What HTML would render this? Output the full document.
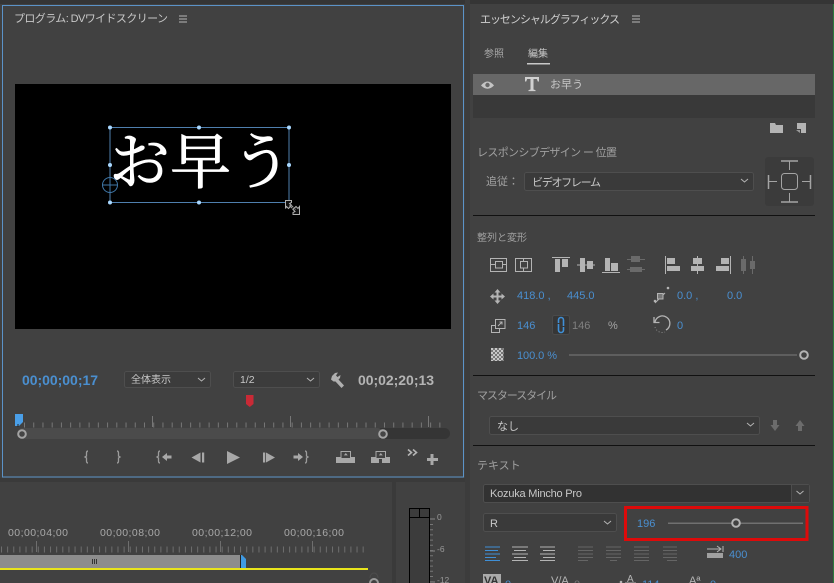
<!DOCTYPE html>
<html><head><meta charset="utf-8"><style>
html,body{margin:0;padding:0;background:#414141;width:834px;height:583px;overflow:hidden}
svg{display:block;filter:blur(.3px)}
text{font-family:"Liberation Sans","Noto Sans CJK JP",sans-serif;font-size:11px}
.g{fill:#a0a0a0}.l{fill:#c8c8c8}
.s{stroke:#b4b4b4;fill:none}
</style></head><body>
<svg width="834" height="583" viewBox="0 0 834 583" xmlns="http://www.w3.org/2000/svg">
<defs><pattern id="ck" width="4" height="4" patternUnits="userSpaceOnUse" x="491" y="348"><rect width="4" height="4" fill="#777"/><rect width="2" height="2" fill="#c8c8c8"/><rect x="2" y="2" width="2" height="2" fill="#c8c8c8"/></pattern></defs>
<rect width="834" height="583" fill="#414141"/>
<rect width="834" height="4" fill="#353535"/>
<rect x="0" y="478" width="465" height="4" fill="#3a3a3a"/>
<rect x="392" y="482" width="4" height="101" fill="#3a3a3a"/>
<rect x="465" y="0" width="5" height="583" fill="#3c3c3c"/>
<rect x="833" y="4" width="1" height="579" fill="#2c7a3c"/>
<rect x="2.500" y="5.500" width="461" height="471.500" fill="none" stroke="#5b93c8"/>

<text x="14" y="22" class="l" textLength="154">プログラム: DVワイドスクリーン</text>
<path d="M179 16h8M179 19h8M179 22h8" stroke="#b8b8b8"/>

<rect x="15" y="84" width="436" height="245" fill="#000"/>
<text x="109" y="183" fill="#fff" stroke="#fff" stroke-width=".7" style="font-family:'Noto Serif CJK SC',serif;font-size:61px">お早う</text>
<rect x="110" y="127.500" width="179" height="75" fill="none" stroke="#4f7fae"/>
<g fill="#a9d8ff"><circle cx="110" cy="127.500" r="2"/><circle cx="199" cy="127.500" r="2"/><circle cx="289" cy="127.500" r="2"/><circle cx="110" cy="165" r="2"/><circle cx="289" cy="165" r="2"/><circle cx="110" cy="202.500" r="2"/><circle cx="199" cy="202.500" r="2"/><circle cx="289" cy="202.500" r="2"/></g>
<circle cx="110" cy="185" r="7.500" fill="none" stroke="#3f77a8"/><path d="M102 185h16M110 177v16" stroke="#3f77a8"/>
<path d="M285.500 200.500h6v2l-2 1 2 2-3 3-2-2-1 2h-0z" fill="#111" stroke="#b0b0b0"/>
<path d="M299.500 214.500h-6.500v-2l2-1-2-2 3-3 2 2 1.500-2z" fill="#111" stroke="#b0b0b0"/>
<path d="M290 205l5 5" stroke="#999" stroke-width="3" stroke-dasharray="1.200 1"/>

<text x="22" y="385" fill="#4a8fd0" style="font-size:14px;font-weight:bold" textLength="76">00;00;00;17</text>
<rect x="124.500" y="371.500" width="86" height="16" rx="2" fill="#3c3c3c" stroke="#4e4e4e"/>
<text x="131" y="383" class="l" style="font-size:10px">全体表示</text>
<path d="M198 378l3.500 3 3.500-3" class="s"/>
<rect x="233.500" y="371.500" width="86" height="16" rx="2" fill="#3c3c3c" stroke="#4e4e4e"/>
<text x="240" y="383" class="l" style="font-size:10.500px">1/2</text>
<path d="M307 378l3.500 3 3.500-3" class="s"/>
<path d="M332 376l3-3 3-.5-2 3 1.500 1.500 3-2-.5 3-1.500 1.500 5.500 6-2.500 2.500-6-6.500-2 0-2.500-2z" fill="#b0b0b0"/>
<text x="358" y="385" fill="#b4b4b4" style="font-size:14px;font-weight:bold" textLength="76">00;02;20;13</text>
<path d="M246 395h7.500v9l-3.750 3-3.750-3z" fill="#c92a36"/>

<line x1="24" y1="425" x2="448" y2="425" stroke="#777" stroke-width="5" stroke-dasharray="1 8.230"/>
<path d="M152.500 416v11M290.500 416v11M428.500 416v11" stroke="#777"/>
<rect x="17" y="428" width="433" height="11" rx="5.500" fill="#353535"/>
<rect x="17" y="428" width="366" height="11" rx="5.500" fill="#4b4b4b"/>
<circle cx="22" cy="434" r="3.800" fill="#444" stroke="#a4a4a4" stroke-width="2"/>
<circle cx="383" cy="434" r="3.800" fill="#444" stroke="#a4a4a4" stroke-width="2"/>
<path d="M15 414h8v8l-4 4h-4z" fill="#4a9fe8"/>
<path d="M18 424v3" stroke="#222"/>

<g fill="none" stroke="#9c9c9c" stroke-width="1.300">
<path d="M88 451q-1.500 0-1.500 2v3l-1.500 1 1.500 1v3q0 2 1.500 2"/>
<path d="M117 451q1.500 0 1.500 2v3l1.500 1-1.500 1v3q0 2-1.500 2"/>
<path d="M160 451q-1.500 0-1.500 2v3l-1.500 1 1.500 1v3q0 2 1.500 2"/>
<path d="M305 451q1.500 0 1.500 2v3l1.500 1-1.500 1v3q0 2-1.500 2"/>
</g>
<g fill="#a8a8a8">
<path d="M162 457l5-4v2.500h4.500v3h-4.500v2.500z"/>
<path d="M191.500 457.500l9-5v10z"/><rect x="202" y="452.500" width="2.200" height="10"/>
<path d="M227 451l13 6.500-13 6.500z"/>
<rect x="263" y="452.500" width="2.200" height="10"/><path d="M266 452.500l9 5-9 5z"/>
<path d="M303 457l-5-4v2.500h-4.500v3h4.500v2.500z"/>
<rect x="336" y="457" width="8" height="6"/><rect x="347" y="457" width="8" height="6"/><rect x="344" y="459" width="3" height="4" />
<path d="M341 451.500h9.500v7h-9.500z" fill="#414141" stroke="#a8a8a8"/><path d="M345.800 453l2 2.400h-4z"/>
<rect x="371" y="457" width="8" height="6"/><rect x="382" y="457" width="8" height="6"/>
<path d="M376 451.500h9.500v7h-9.500z" fill="#414141" stroke="#a8a8a8"/><path d="M380.800 453l2 2.400h-4z"/>
<rect x="430.500" y="454" width="3" height="11"/><rect x="427" y="458" width="11" height="3"/>
</g>
<path d="M408 449.500l3.500 3-3.500 3M413 449.500l3.500 3-3.500 3" fill="none" stroke="#b4b4b4" stroke-width="1.600"/>

<g fill="#a8a8a8">
<text x="8" y="536" style="font-size:10.500px" textLength="60">00;00;04;00</text>
<text x="100" y="536" style="font-size:10.500px" textLength="60">00;00;08;00</text>
<text x="192" y="536" style="font-size:10.500px" textLength="60">00;00;12;00</text>
<text x="284" y="536" style="font-size:10.500px" textLength="60">00;00;16;00</text>
</g>
<line x1="1" y1="549.500" x2="368" y2="549.500" stroke="#6e6e6e" stroke-width="6" stroke-dasharray="1 5.130"/>
<path d="M36.500 541v11M128.500 541v11M220.500 541v11M312.500 541v11" stroke="#6e6e6e"/>
<rect x="0" y="555" width="240" height="13" fill="#8d8d8d"/>
<path d="M92.500 559v5M94.500 559v5M96.500 559v5" stroke="#333"/>
<path d="M241 555h1l4 4v9h-5z" fill="#3f9ae2"/>
<rect x="240" y="555" width="1" height="13" fill="#222"/>
<rect x="0" y="568" width="368" height="2" fill="#e8e41c"/>
<circle cx="374" cy="583" r="4" fill="none" stroke="#999" stroke-width="2"/>
<path d="M370 578a4 5 0 0 1 8 0" fill="none" stroke="#4c4c4c"/>

<rect x="409.500" y="508.500" width="20" height="80" fill="#3c3c3c" stroke="#000"/>
<path d="M409.500 517.500h20M419.500 508.500v9" stroke="#000"/>
<path d="M430 519h5M430 551h5M430 582h5" stroke="#888"/>
<line x1="431.500" y1="524" x2="431.500" y2="583" stroke="#777" stroke-width="3" stroke-dasharray="1 4.200"/>
<g fill="#999"><text x="437" y="520" style="font-size:8.500px">0</text><text x="437" y="552" style="font-size:8.500px">-6</text><text x="437" y="583" style="font-size:8.500px">-12</text></g>

<text x="480" y="23" fill="#d0d0d0" textLength="140">エッセンシャルグラフィックス</text>
<path d="M632 16h8M632 19h8M632 22h8" stroke="#b8b8b8"/>
<text x="484" y="57" fill="#a8a8a8" style="font-size:10px">参照</text>
<text x="528" y="57" fill="#c8c8c8" style="font-size:10px">編集</text>
<rect x="527" y="63" width="23" height="1.500" fill="#c8c8c8"/>
<rect x="473" y="74" width="342" height="21" fill="#676767"/>
<rect x="473" y="95" width="342" height="23" fill="#393939"/>
<path d="M481 85.500q6.500-8 13 0q-6.500 6.500-13 0z" fill="#c4c4c4"/><circle cx="487.500" cy="85" r="2.200" fill="#676767"/>
<path d="M525 77h14v4.500h-1.200l-1-2.500h-3.300v10.500l2 .6v1h-7v-1l2-.6v-10.500h-3.300l-1 2.500h-1.200z" fill="#d0d0d0"/>
<text x="550" y="88" fill="#c8c8c8" style="font-size:11px">お早う</text>
<path d="M770 123h5l1 2h7v8h-13z" fill="#b4b4b4"/>
<path d="M797 123h9v10h-5v-4h-4z" fill="#b4b4b4"/><path d="M796 130h4v3z" fill="#999"/>

<text x="477" y="156" class="g" textLength="140">レスポンシブデザイン ー 位置</text>
<text x="486" y="185" class="g">追従：</text>
<rect x="524.500" y="172.500" width="229" height="18" rx="2" fill="#3a3a3a" stroke="#4e4e4e"/>
<text x="532" y="186" fill="#c8c8c8" textLength="69">ビデオフレーム</text>
<path d="M741 179l3.500 3 3.500-3" class="s"/>
<rect x="765" y="157" width="49" height="49" rx="3" fill="#3b3b3b"/>
<g fill="none" stroke="#a4a4a4">
<rect x="781.500" y="173.500" width="16" height="16" rx="3"/>
<path d="M789.500 161v9" /><path d="M781 161h17" stroke-width="1.500"/>
<path d="M789.500 193v9"/><path d="M781 202h17" stroke-width="1.500"/>
<path d="M768 181.500h9"/><path d="M768.500 175v14" stroke-width="1.500"/>
<path d="M802 181.500h9"/><path d="M810.500 175v14" stroke-width="1.500"/>
</g>
<rect x="473" y="215" width="342" height="1" fill="#111"/>

<text x="477" y="241" class="g" style="font-size:10px">整列と変形</text>
<g fill="none" stroke="#b4b4b4">
<rect x="490.500" y="258.500" width="16" height="13"/><rect x="495.500" y="261.500" width="7" height="6.500"/><path d="M490 264.500h5M503 264.500h4"/>
<rect x="515.500" y="258.500" width="16" height="13"/><rect x="520.500" y="261.500" width="7" height="6.500"/><path d="M523.500 258v3M523.500 268v4"/>
</g>
<g fill="#b4b4b4">
<rect x="552" y="257" width="18" height="1"/><rect x="555" y="259" width="5" height="13"/><rect x="562" y="259" width="6" height="8"/>
<rect x="577" y="264.500" width="18" height="1"/><rect x="580" y="258" width="5" height="14"/><rect x="587" y="261" width="6" height="8"/>
<rect x="602" y="272" width="18" height="1"/><rect x="605" y="258" width="5" height="13"/><rect x="611" y="263" width="7" height="8"/>
<rect x="665" y="256" width="1" height="18"/><rect x="667" y="258" width="8" height="6"/><rect x="667" y="266" width="13" height="5"/>
<rect x="697" y="256" width="1" height="18"/><rect x="693" y="258" width="9" height="6"/><rect x="691" y="266" width="13" height="5"/>
<rect x="730" y="256" width="1" height="18"/><rect x="721" y="258" width="8" height="6"/><rect x="716" y="266" width="13" height="5"/>
</g>
<g fill="#6a6a6a">
<rect x="627" y="259" width="18" height="1"/><rect x="631" y="256" width="9" height="6"/><rect x="627" y="269" width="18" height="1"/><rect x="630" y="267" width="12" height="5"/>
<rect x="743" y="256" width="1" height="18"/><rect x="741" y="259" width="5" height="12"/><rect x="752" y="256" width="1" height="18"/><rect x="750" y="261" width="5" height="8"/>
</g>

<path d="M497.500 289l3 3.500h-2v3h3v-2l3.500 3-3.500 3v-2h-3v3h2l-3 3.500-3-3.500h2v-3h-3v2l-3.500-3 3.500-3v2h3v-3h-2z" fill="#b4b4b4"/>
<g fill="#4a8fd0">
<text x="517" y="299">418.0 ,</text>
<text x="567" y="299">445.0</text>
<text x="677" y="299">0.0 ,</text>
<text x="727" y="299">0.0</text>
<text x="517" y="329">146</text>
<text x="677" y="329">0</text>
<text x="517" y="359" textLength="40">100.0 %</text>
</g>
<path d="M655 303l10-10" stroke="#b4b4b4"/><rect x="657.500" y="293.500" width="5.500" height="5.500" fill="#777" stroke="#b4b4b4"/>
<circle cx="655" cy="301" r="1.300" fill="#b4b4b4"/><circle cx="668" cy="288" r="1.300" fill="#b4b4b4"/>
<g fill="none" stroke="#b4b4b4"><rect x="491.500" y="325.500" width="8" height="7"/><rect x="495.500" y="319.500" width="9.500" height="9" fill="#414141"/><path d="M498 326l4-4M499.500 322h2.500v2.500"/></g>
<rect x="552.500" y="315.500" width="17" height="19" rx="2" fill="#363636" stroke="#4a4a4a"/>
<path d="M558.500 323v-3a2.500 2.500 0 0 1 5 0v6M558.500 324v6a2.500 2.500 0 0 0 5 0v-3" fill="none" stroke="#3f8fd6" stroke-width="1.600"/>
<text x="572" y="329" fill="#808080">146</text>
<text x="608" y="329" fill="#a4a4a4">%</text>
<path d="M655 322a7.500 7.500 0 1 1 11 8" fill="none" stroke="#b4b4b4" stroke-width="1.300"/>
<path d="M654 317v5.500h5.500" fill="none" stroke="#b4b4b4" stroke-width="1.300"/>
<path d="M655 327a7.500 7.500 0 0 0 10 5" fill="none" stroke="#888" stroke-dasharray="1 2"/>
<rect x="491" y="348" width="12.500" height="13" fill="url(#ck)"/>
<rect x="569" y="354" width="228" height="2" fill="#5e5e5e"/>
<circle cx="804" cy="355" r="3.800" fill="#414141" stroke="#b4b4b4" stroke-width="2"/>
<rect x="473" y="375" width="342" height="1" fill="#111"/>

<text x="477" y="399" class="g" textLength="80">マスタースタイル</text>
<rect x="489.500" y="416.500" width="270" height="18" rx="2" fill="#3a3a3a" stroke="#4e4e4e"/>
<text x="497" y="430" fill="#c8c8c8">なし</text>
<path d="M747 423l3.500 3 3.500-3" class="s"/>
<path d="M773 420h4v5h2.500l-4.500 6-4.500-6h2.500z" fill="#6c6c6c"/>
<path d="M798 431h4v-5h2.500l-4.500-6-4.500 6h2.500z" fill="#6c6c6c"/>
<rect x="473" y="445" width="342" height="1" fill="#111"/>

<text x="477" y="469" class="g">テキスト</text>
<rect x="483.500" y="484.500" width="326" height="18" rx="2" fill="#323232" stroke="#4e4e4e"/>
<rect x="792" y="485" width="17" height="17" fill="#3c3c3c"/><path d="M791.500 485v17" stroke="#4e4e4e"/>
<text x="490" y="497" fill="#c8c8c8" textLength="92">Kozuka Mincho Pro</text>
<path d="M796.500 491l3.500 3 3.500-3" class="s"/>
<rect x="483.500" y="513.500" width="133" height="18" rx="2" fill="#3a3a3a" stroke="#4e4e4e"/>
<text x="490" y="527" fill="#c8c8c8">R</text>
<path d="M604 521l3.500 3 3.500-3" class="s"/>
<rect x="625.500" y="507.500" width="181.500" height="32" fill="none" stroke="#dd0a0a" stroke-width="3"/>
<text x="637" y="527" fill="#4a8fd0">196</text>
<rect x="668" y="522.500" width="135" height="1.500" fill="#707070"/>
<circle cx="736" cy="523" r="3.800" fill="#414141" stroke="#b4b4b4" stroke-width="2"/>

<path d="M485 547h15M485 550.500h13M485 554h15M485 557.500h11M485 560.500h15" stroke="#3f8fd6"/>
<path d="M512 547h16M514 550.500h12M512 554h16M514 557.500h12M512 560.500h16" stroke="#b4b4b4"/>
<path d="M540 547h15M543 550.500h12M540 554h15M543 557.500h12M540 560.500h15" stroke="#b4b4b4"/>
<g stroke="#656565">
<path d="M578 547h15M578 550.500h15M578 554h15M578 557.500h15M578 560.500h10"/>
<path d="M606 547h15M606 550.500h15M606 554h15M606 557.500h15M610 560.500h7"/>
<path d="M634 547h15M634 550.500h15M634 554h15M634 557.500h15M634 560.500h15"/>
<path d="M663 547h14M663 550.500h14M663 554h14M663 557.500h14M667 560.500h10"/>
</g>
<path d="M707 549h14M717 546l4 3-4 3M723 546v6" fill="none" stroke="#b4b4b4"/>
<rect x="707" y="553" width="16" height="5" fill="#a0a0a0"/>
<text x="729" y="558" fill="#4a8fd0">400</text>

<rect x="483" y="574" width="18" height="9" fill="#aaa"/>
<text x="484" y="584" fill="#333" style="font-size:11px;font-weight:bold">VA</text>
<text x="505" y="588" fill="#4a8fd0">0</text>
<text x="551" y="584" fill="#b4b4b4" style="font-size:11px">V/A</text>
<text x="574" y="588" fill="#777">0</text>
<text x="627" y="582" fill="#b4b4b4" style="font-size:10px">A</text>
<path d="M625 583h11" stroke="#b4b4b4"/><circle cx="621" cy="582" r="1.300" fill="#b4b4b4"/>
<text x="642" y="588" fill="#4a8fd0">114</text>
<text x="689" y="584" fill="#b4b4b4" style="font-size:11px">Aª</text>
<text x="710" y="588" fill="#4a8fd0">0</text>
</svg>
</body></html>
